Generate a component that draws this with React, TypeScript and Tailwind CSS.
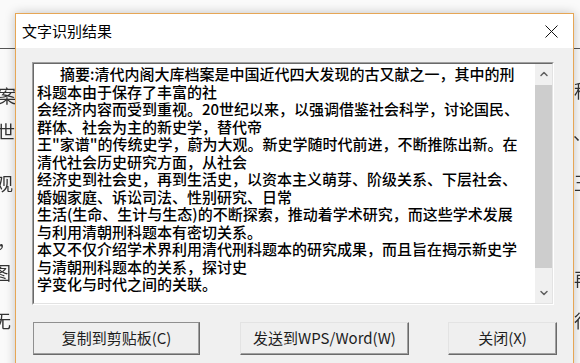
import { ChevronDown, ChevronUp } from "lucide-react"

const cjk = "font-['Noto_Sans_CJK_SC','Noto_Sans',sans-serif]"

const lines = [
    "科题本由于保存了丰富的社",
    "会经济内容而受到重视。20世纪以来，以强调借鉴社会科学，讨论国民、",
    "群体、社会为主的新史学，替代帝",
    "王\"家谱\"的传统史学，蔚为大观。新史学随时代前进，不断推陈出新。在",
    "清代社会历史研究方面，从社会",
    "经济史到社会史，再到生活史，以资本主义萌芽、阶级关系、下层社会、",
    "婚姻家庭、诉讼司法、性别研究、日常",
    "生活(生命、生计与生态)的不断探索，推动着学术研究，而这些学术发展",
    "与利用清朝刑科题本有密切关系。",
    "本又不仅介绍学术界利用清代刑科题本的研究成果，而且旨在揭示新史学",
    "与清朝刑科题本的关系，探讨史",
    "学变化与时代之间的关联。",
]

function Button({ label, width, primary }: { label: string; width: string; primary?: boolean }) {
    return (
        <button
            className={`${width} h-[33px] flex items-center justify-center border bg-[#efefef] text-[15px] text-[#1e1e1e] border-b-[#6a6a6a] border-r-[#6a6a6a] shadow-[inset_-1px_-1px_0_#a0a0a0] ${
                primary ? "border-t-[#8f8f8f] border-l-[#8f8f8f]" : "border-t-[#e3e3e3] border-l-[#e3e3e3]"
            }`}
        >
            {label}
        </button>
    )
}

export default function App() {
    return (
        <div className={`relative w-[580px] h-[363px] overflow-hidden bg-[#fafafa] ${cjk}`}>
            {/* document behind the dialog */}
            <div className="flex h-full justify-between text-[#333] text-[18px] leading-[20px] blur-[0.4px]">
                <div className="w-[15px] overflow-hidden flex flex-col whitespace-nowrap">
                    <div className="h-[49px] border-b border-[#555]" />
                    <div className="mt-[36px] -ml-[2px]">案</div>
                    <div className="mt-[16px] -ml-[3px]">世</div>
                    <div className="mt-[32px] -ml-[5px]">观</div>
                    <div className="mt-[37px] -ml-[3px]">，l</div>
                    <div className="mt-[12px] -ml-[7px]">图</div>
                    <div className="mt-[28px] -ml-[7px]">无 才</div>
                </div>
                <div className="w-[7px] overflow-hidden flex flex-col whitespace-nowrap">
                    <div className="h-[49px] border-b border-[#555]" />
                    <div className="mt-[31px] ml-[1px]">程</div>
                    <div className="mt-[22px]">、</div>
                    <div className="mt-[30px] ml-[1px]">王</div>
                    <div className="mt-[76px] ml-[1px]">再</div>
                    <div className="mt-[22px] ml-[1px]">行</div>
                </div>
            </div>

            {/* dialog window */}
            <div className="absolute left-[15px] top-[13px] w-[559px] h-[360px] flex flex-col border border-[#e6a655] bg-[#f0f0f0] shadow-[0_0_10px_rgba(0,0,0,0.22)]">
                <div className="h-[34px] shrink-0 bg-white flex items-center justify-between pl-[6px] pr-[15px]">
                    <span className="text-[15px] text-black">文字识别结果</span>
                    <svg width="13" height="13" viewBox="0 0 13 13">
                        <path d="M0.5 0.5 L12.5 12.5 M12.5 0.5 L0.5 12.5" stroke="#111" strokeWidth="1" />
                    </svg>
                </div>

                <div className="pl-[16px] pt-[14px]">
                    <div className="w-[522px] h-[243px] border border-t-[#a0a0a0] border-l-[#a0a0a0] border-b-white border-r-white">
                        <div className="h-full flex bg-white border border-t-[#696969] border-l-[#696969] border-b-[#e3e3e3] border-r-[#e3e3e3]">
                            <div className="flex-1 pl-[3px] pt-[1px] text-[15px] font-medium leading-[17.5px] text-black whitespace-nowrap overflow-hidden">
                                <div className="pl-[23px]">摘要:清代内阁大库档案是中国近代四大发现的古又献之一，其中的刑</div>
                                {lines.map((l, i) => (
                                    <div key={i}>{l}</div>
                                ))}
                            </div>
                            <div className="w-[17px] flex flex-col bg-[#f0f0f0]">
                                <div className="h-[20px] flex items-center justify-center">
                                    <ChevronUp className="w-[12px] h-[12px] text-[#606060]" strokeWidth={3} />
                                </div>
                                <div className="mt-[1px] h-[183px] bg-[#cdcdcd]" />
                                <div className="flex-1" />
                                <div className="h-[20px] flex items-center justify-center">
                                    <ChevronDown className="w-[12px] h-[12px] text-[#606060]" strokeWidth={3} />
                                </div>
                            </div>
                        </div>
                    </div>
                </div>

                <div className="mt-[17px] pl-[17px] flex">
                    <Button label="复制到剪贴板(C)" width="w-[167px]" primary />
                    <div className="w-[40px]" />
                    <Button label="发送到WPS/Word(W)" width="w-[169px]" />
                    <div className="w-[39px]" />
                    <Button label="关闭(X)" width="w-[109px]" />
                </div>
            </div>
        </div>
    )
}
